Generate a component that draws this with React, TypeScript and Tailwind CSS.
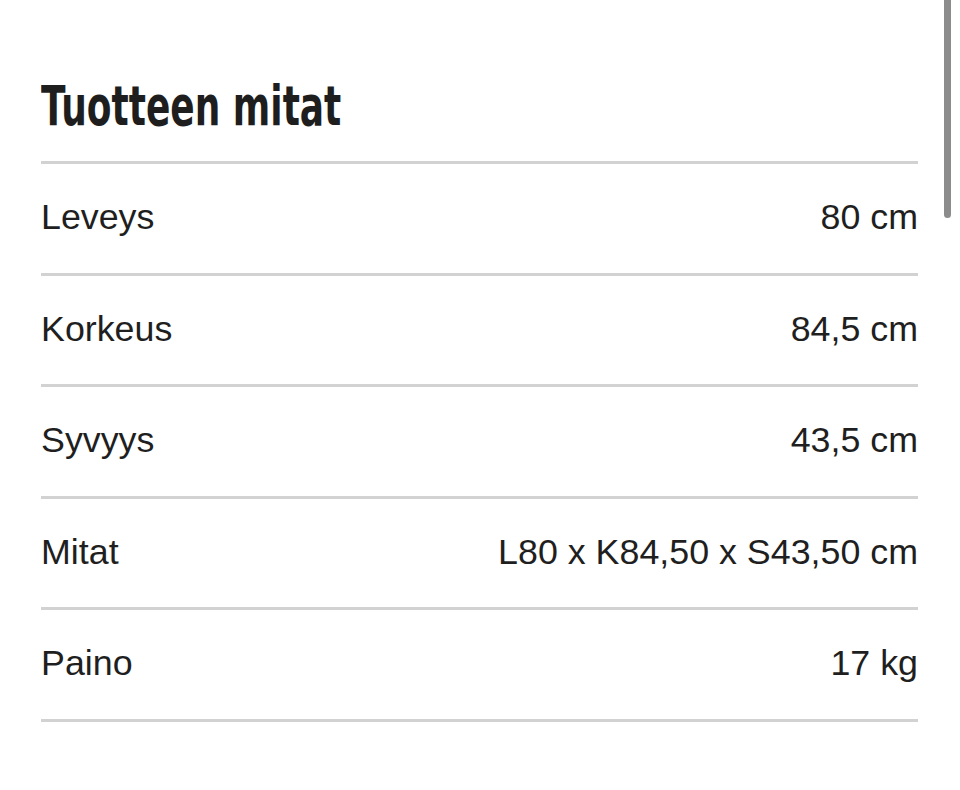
const rows = [
  { label: "Leveys", value: "80 cm" },
  { label: "Korkeus", value: "84,5 cm" },
  { label: "Syvyys", value: "43,5 cm" },
  { label: "Mitat", value: "L80 x K84,50 x S43,50 cm" },
  { label: "Paino", value: "17 kg" },
];

export default function App() {
  return (
    <div className="relative h-[790px] w-[960px] overflow-hidden bg-white">
      {/* overlay scrollbar thumb */}
      <div className="absolute right-[9px] top-0 h-[218px] w-[7px] rounded-b-full bg-[#8c8c8c]" />

      <div className="pl-[41px] pr-[42px] pt-[79px]">
        <h1 className="mb-[27px] h-[55px] origin-left scale-x-[0.727] whitespace-nowrap font-['DejaVu_Sans_Condensed','DejaVu_Sans',sans-serif] text-[55px] font-bold leading-none text-[#1e1e1e]">
          Tuotteen mitat
        </h1>

        <div className="font-['Liberation_Sans',Arial,sans-serif] text-[35.8px] text-[#1f1f1f]">
          {rows.map((r) => (
            <div
              key={r.label}
              className="flex h-[111.5px] items-center justify-between border-t-[3px] border-[#d2d2d2] leading-none"
            >
              <span>{r.label}</span>
              <span>{r.value}</span>
            </div>
          ))}
          <div className="border-t-[3px] border-[#d2d2d2]" />
        </div>
      </div>
    </div>
  );
}
